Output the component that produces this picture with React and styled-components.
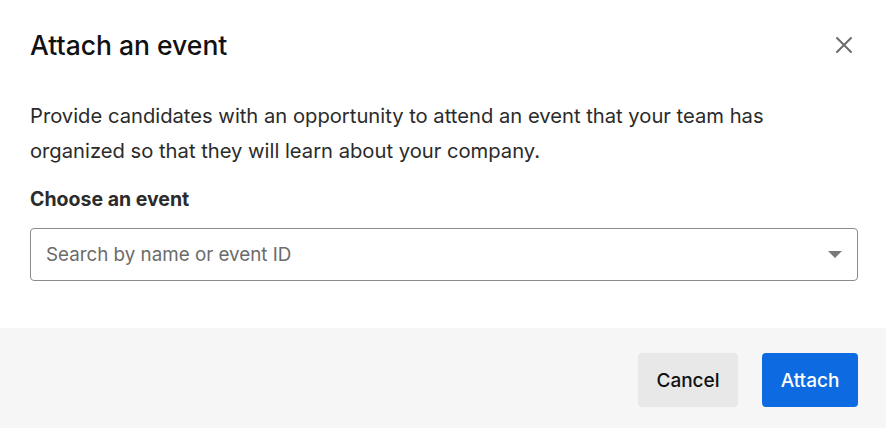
import React from "react";
import styled, { createGlobalStyle } from "styled-components";

const GlobalStyle = createGlobalStyle`
  html, body {
    margin: 0;
    padding: 0;
    background: #ffffff;
  }
  body {
    font-family: Inter, "Noto Sans", sans-serif;
    color: #1a1a1a;
  }
  * { box-sizing: border-box; }
`;

const Dialog = styled.div`
  width: 886px;
  height: 428px;
  display: flex;
  flex-direction: column;
  background: #ffffff;
`;

const Body = styled.div`
  flex: 1;
  padding: 28px 28px 0 30px;
  display: flex;
  flex-direction: column;
`;

const Header = styled.div`
  display: flex;
  align-items: center;
  justify-content: space-between;
  height: 34px;
`;

const Title = styled.h2`
  margin: 0;
  font-size: 26.5px;
  font-weight: 500;
  color: #111111;
`;

const CloseButton = styled.button`
  border: none;
  background: none;
  padding: 0;
  width: 30px;
  height: 30px;
  display: flex;
  align-items: center;
  justify-content: center;
  margin-right: -1px;
  cursor: pointer;
`;

const Description = styled.p`
  margin: 36px 0 0;
  font-size: 20.2px;
  line-height: 35px;
  color: #2b2b2b;
  max-width: 800px;
`;

const Label = styled.label`
  margin-top: 20px;
  font-size: 19.5px;
  line-height: 22px;
  font-weight: 700;
  color: #2b2b2b;
`;

const SelectBox = styled.div`
  margin-top: 18px;
  width: 828px;
  height: 53px;
  border: 1px solid #8c8c8c;
  border-radius: 4px;
  display: flex;
  align-items: center;
  padding: 0 15px;
  justify-content: space-between;
`;

const Placeholder = styled.span`
  font-size: 18.8px;
  color: #6b6b6b;
`;

const Caret = styled.span`
  width: 0;
  height: 0;
  border-left: 7px solid transparent;
  border-right: 7px solid transparent;
  border-top: 7px solid #7a7a7a;
`;

const Footer = styled.div`
  height: 100px;
  background: #f6f6f6;
  display: flex;
  align-items: center;
  justify-content: flex-end;
  gap: 24px;
  padding: 4px 28px 0 0;
`;

const Button = styled.button`
  height: 54px;
  padding: 0 18px;
  min-width: ${(p) => (p.$primary ? "96px" : "100px")};
  border: none;
  border-radius: 4px;
  font-family: Inter, "Noto Sans", sans-serif;
  font-size: 19px;
  font-weight: 500;
  background: ${(p) => (p.$primary ? "#0d6ae0" : "#e8e8e8")};
  color: ${(p) => (p.$primary ? "#ffffff" : "#111111")};
  cursor: pointer;
`;

export default function App() {
  return (
    <>
      <GlobalStyle />
      <Dialog>
        <Body>
          <Header>
            <Title>Attach an event</Title>
            <CloseButton aria-label="Close">
              <svg width="18" height="18" viewBox="0 0 18 18">
                <path d="M2 2 L16 16 M16 2 L2 16" stroke="#6b6b6b" strokeWidth="2" strokeLinecap="round" />
              </svg>
            </CloseButton>
          </Header>
          <Description>
            Provide candidates with an opportunity to attend an event that your team has
            organized so that they will learn about your company.
          </Description>
          <Label>Choose an event</Label>
          <SelectBox>
            <Placeholder>Search by name or event ID</Placeholder>
            <Caret />
          </SelectBox>
        </Body>
        <Footer>
          <Button>Cancel</Button>
          <Button $primary>Attach</Button>
        </Footer>
      </Dialog>
    </>
  );
}
